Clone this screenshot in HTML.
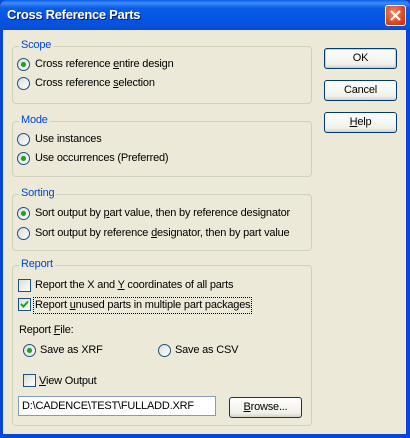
<!DOCTYPE html>
<html><head><style>
*{margin:0;padding:0;box-sizing:border-box}
body{width:410px;height:438px;overflow:hidden;background:#0846d8;font-family:"Liberation Sans",sans-serif;font-size:11px;letter-spacing:-0.2px;color:#000;position:relative}
.title{position:absolute;left:0;top:0;width:410px;height:30px;border-radius:7px 7px 0 0;background:linear-gradient(#0a5ee8 0,#3d8cf7 3px,#0a5de6 8px,#0554e2 20px,#0a4fd6 28px,#0846d8 30px)}
.title span{position:absolute;left:7px;top:7px;color:#fff;font-weight:bold;font-size:13px;letter-spacing:-0.3px;text-shadow:1px 1px #0a1f70}
.close{position:absolute;left:385px;top:5px;width:21px;height:21px;border:1px solid #fff;border-radius:3px;background:radial-gradient(circle at 40% 35%,#f08a6a,#d84a22 60%,#b83010)}
.body{position:absolute;left:3px;top:30px;width:403px;height:404px;background:#ece9d8}
.a{position:absolute;white-space:nowrap}
.grp{position:absolute;border:1px solid #d0d0bf;border-radius:4px}
.gl{position:absolute;color:#0046d5;background:#ece9d8;padding:0 2px;line-height:13px}
.r{position:absolute;width:13px;height:13px;border-radius:50%;border:1px solid #1c5180;background:linear-gradient(135deg,#dcdcd6,#fff)}
.r.on::after{content:"";position:absolute;left:3px;top:3px;width:5px;height:5px;border-radius:50%;background:#21a121;box-shadow:0 0 1px #6fd86f}
.c{position:absolute;width:13px;height:13px;border:1px solid #1c5180;background:linear-gradient(135deg,#dcdcd6,#fff)}
.btn{position:absolute;width:73px;height:21px;border:1px solid #003c74;border-radius:3px;background:linear-gradient(#fff,#f0f0ea 80%,#d6d0c5);text-align:center;line-height:19px}
.t{line-height:13px}
u{text-decoration:underline}
</style></head><body>
<div class="title"><span>Cross Reference Parts</span>
<div class="close"><svg width="19" height="19" viewBox="0 0 19 19"><path d="M5 5L14 14M14 5L5 14" stroke="#fff" stroke-width="2.2"/></svg></div></div>

<div class="grp" style="left:12px;top:46px;width:300px;height:58px"></div>
<div class="gl" style="left:19px;top:39px">Scope</div>
<div class="r on" style="left:17px;top:58px"></div><div class="a t" style="left:35px;top:58px">Cross reference <u>e</u>ntire design</div>
<div class="r" style="left:17px;top:77px"></div><div class="a t" style="left:35px;top:77px">Cross reference <u>s</u>election</div>

<div class="grp" style="left:12px;top:121px;width:300px;height:56px"></div>
<div class="gl" style="left:19px;top:114px">Mode</div>
<div class="r" style="left:17px;top:133px"></div><div class="a t" style="left:35px;top:133px">Use instances</div>
<div class="r on" style="left:17px;top:152px"></div><div class="a t" style="left:35px;top:152px">Use occurrences (Preferred)</div>

<div class="grp" style="left:12px;top:194px;width:300px;height:57px"></div>
<div class="gl" style="left:19px;top:187px">Sorting</div>
<div class="r on" style="left:17px;top:207px"></div><div class="a t" style="left:35px;top:207px">Sort output by <u>p</u>art value, then by reference designator</div>
<div class="r" style="left:17px;top:227px"></div><div class="a t" style="left:35px;top:227px">Sort output by reference <u>d</u>esignator, then by part value</div>

<div class="grp" style="left:12px;top:265px;width:300px;height:161px"></div>
<div class="gl" style="left:19px;top:258px">Report</div>
<div class="c" style="left:18px;top:279px"></div><div class="a t" style="left:35px;top:279px">Report the X and <u>Y</u> coordinates of all parts</div>
<div class="c" style="left:18px;top:298px"><svg width="11" height="11" viewBox="0 0 11 11" style="position:absolute;left:0;top:0"><path d="M2 5L4.5 7.5L9 2.5" stroke="#21a121" stroke-width="2" fill="none"/></svg></div>
<div class="a t" style="left:33px;top:297px;border:1px dotted #000;padding:1px 1px">Report <u>u</u>nused parts in multiple part packages</div>
<div class="a t" style="left:19px;top:324px">Report <u>F</u>ile:</div>
<div class="r on" style="left:23px;top:344px"></div><div class="a t" style="left:40px;top:344px">Save as XRF</div>
<div class="r" style="left:158px;top:344px"></div><div class="a t" style="left:175px;top:344px">Save as CSV</div>
<div class="c" style="left:23px;top:374px"></div><div class="a t" style="left:39px;top:375px"><u>V</u>iew Output</div>
<div class="a" style="left:18px;top:396px;width:198px;height:20px;border:1px solid #7f9db9;background:#fff;padding:3px 3px;line-height:13px">D:\CADENCE\TEST\FULLADD.XRF</div>
<div class="btn" style="left:229px;top:397px;width:73px"><u>B</u>rowse...</div>

<div class="btn" style="left:324px;top:48px;border-color:#003c74;box-shadow:inset 0 0 0 1px #b9d1f9">OK</div>
<div class="btn" style="left:324px;top:80px">Cancel</div>
<div class="btn" style="left:324px;top:112px"><u>H</u>elp</div>
<div class="body" style="z-index:-1"></div>
</body></html>
